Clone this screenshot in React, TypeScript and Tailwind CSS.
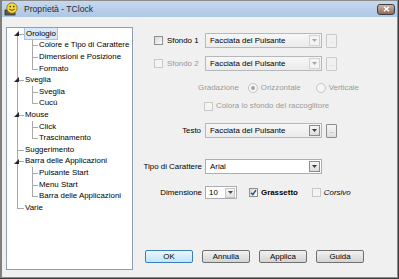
import React from "react";
import clsx from "clsx";

type TreeNode = {
  label: string;
  level: 0 | 1;
  rootLine: "full" | "bottom" | "top" | "none";
  childLine?: "full" | "top";
  expander?: boolean;
  selected?: boolean;
};

const tree: TreeNode[] = [
  { label: "Orologio", level: 0, rootLine: "bottom", expander: true, selected: true },
  { label: "Colore e Tipo di Carattere", level: 1, rootLine: "full", childLine: "full" },
  { label: "Dimensioni e Posizione", level: 1, rootLine: "full", childLine: "full" },
  { label: "Formato", level: 1, rootLine: "full", childLine: "top" },
  { label: "Sveglia", level: 0, rootLine: "full", expander: true },
  { label: "Sveglia", level: 1, rootLine: "full", childLine: "full" },
  { label: "Cucù", level: 1, rootLine: "full", childLine: "top" },
  { label: "Mouse", level: 0, rootLine: "full", expander: true },
  { label: "Click", level: 1, rootLine: "full", childLine: "full" },
  { label: "Trascinamento", level: 1, rootLine: "full", childLine: "top" },
  { label: "Suggerimento", level: 0, rootLine: "full" },
  { label: "Barra delle Applicazioni", level: 0, rootLine: "full", expander: true },
  { label: "Pulsante Start", level: 1, rootLine: "full", childLine: "full" },
  { label: "Menu Start", level: 1, rootLine: "full", childLine: "full" },
  { label: "Barra delle Applicazioni", level: 1, rootLine: "full", childLine: "top" },
  { label: "Varie", level: 0, rootLine: "top" },
];

const TreeRow = ({ node }: { node: TreeNode }) => (
  <div className="flex h-[11.6px] items-center">
    {/* root column */}
    <div className="relative h-full w-[17px] shrink-0">
      {node.rootLine !== "none" && (
        <span
          className={clsx(
            "absolute left-[10px] w-px bg-[#a9a9a9]",
            node.rootLine === "full" && "top-0 bottom-0",
            node.rootLine === "bottom" && "top-1/2 bottom-0",
            node.rootLine === "top" && "top-0 h-1/2"
          )}
        />
      )}
      {node.level === 0 && (
        <span className="absolute left-[10px] top-1/2 h-px w-[7px] bg-[#a9a9a9]" />
      )}
      {node.expander && (
        <svg className="absolute left-[7px] top-[3px]" width="5" height="5" viewBox="0 0 5 5">
          <polygon points="5,0 5,5 0,5" fill="#262626" />
        </svg>
      )}
    </div>
    {node.level === 1 && (
      <div className="relative h-full w-[14px] shrink-0">
        <span
          className={clsx(
            "absolute left-[8px] w-px bg-[#a9a9a9]",
            node.childLine === "full" ? "top-0 bottom-0" : "top-0 h-1/2"
          )}
        />
        <span className="absolute left-[8px] top-1/2 h-px w-[6px] bg-[#a9a9a9]" />
      </div>
    )}
    <span
      className={clsx(
        "whitespace-nowrap leading-none",
        node.level === 0 ? "px-[1px] py-[1.5px]" : "ml-[1px]",
        node.selected && "border border-[#9ec4ea] bg-[#d7e9fb] px-[0px]"
      )}
    >
      {node.label}
    </span>
  </div>
);

const Check = ({ checked, disabled }: { checked?: boolean; disabled?: boolean }) => (
  <span
    className={clsx(
      "flex h-[9px] w-[9px] shrink-0 items-center justify-center border",
      disabled
        ? "border-[#c9c9c9] bg-[#f4f4f4]"
        : "border-[#8e8f8f] bg-gradient-to-br from-[#d6d9dc] to-[#fbfbfb]"
    )}
  >
    {checked && (
      <svg width="7" height="7" viewBox="0 0 7 7">
        <path d="M1 3.8 L2.8 5.6 L6 1.2" fill="none" stroke="#2a4a7a" strokeWidth="1.4" />
      </svg>
    )}
  </span>
);

const Radio = ({ checked }: { checked?: boolean }) => (
  <span className="flex h-[10px] w-[10px] shrink-0 items-center justify-center rounded-full border border-[#c4c4c4] bg-[#f6f6f6]">
    {checked && <span className="h-[4px] w-[4px] rounded-full bg-[#a6a6a6]" />}
  </span>
);

const Arrow = ({ color }: { color: string }) => (
  <svg width="5" height="3" viewBox="0 0 5 3">
    <polygon points="0,0 5,0 2.5,3" fill={color} />
  </svg>
);

const Combo = ({
  text,
  width,
  variant,
}: {
  text: string;
  width: string;
  variant: "dim" | "list" | "edit";
}) => (
  <div
    className={clsx(
      "flex h-[15px] items-center border pl-[4px] pr-[1px]",
      width,
      variant === "edit"
        ? "border-[#abadb3] bg-white"
        : "border-[#b5b8bc] bg-gradient-to-b from-[#f7f7f7] to-[#ebebeb]"
    )}
  >
    <span className="flex-1 whitespace-nowrap leading-none">{text}</span>
    <span
      className={clsx(
        "flex h-[11px] w-[11px] items-center justify-center border",
        variant === "dim"
          ? "border-[#d2d2d2] bg-[#f4f4f4]"
          : "border-[#8c8c8c] bg-gradient-to-b from-[#f6f6f6] to-[#dcdcdc]"
      )}
    >
      <Arrow color={variant === "dim" ? "#a8a8a8" : "#3c3c3c"} />
    </span>
  </div>
);

const Dots = ({ dim }: { dim?: boolean }) => (
  <div
    className={clsx(
      "flex h-[14px] w-[11px] items-end justify-center rounded-[1px] border pb-[3px] text-[5px] leading-none",
      dim ? "border-[#cacaca] text-[#b4b4b4]" : "border-[#8c8c8c] bg-gradient-to-b from-[#f6f6f6] to-[#dedede] text-[#5a5a5a]"
    )}
  >
    ...
  </div>
);

const Button = ({ label, focused }: { label: string; focused?: boolean }) => (
  <div
    className={clsx(
      "flex h-[13px] w-[48px] items-center justify-center rounded-[2px] border leading-none",
      focused
        ? "border-[#3c7fb1] bg-gradient-to-b from-[#eaf6fd] to-[#bee6fd]"
        : "border-[#707070] bg-gradient-to-b from-[#f2f2f2] to-[#d4d4d4]"
    )}
  >
    {label}
  </div>
);

export default function App() {
  return (
    <div className="flex h-[279px] w-[399px] flex-col overflow-hidden border-r border-b border-[#3d3d3d] font-['Liberation_Sans',Arial,sans-serif] text-[7.9px] text-black">
      <div className="flex flex-1 flex-col border-r border-b border-l-2 border-r-[#35a7d3] border-b-[#35a7d3] border-l-[#7f7f7f] bg-[#f0f0f0]">
        {/* title bar */}
        <div className="flex h-[17px] shrink-0 items-center border-t border-[#8c8c8c] bg-gradient-to-b from-[#c6d8ee] to-[#aec7e5] pl-[2px] pr-[2px]">
          <svg width="15" height="14" viewBox="0 0 15 14">
            <rect x="1" y="8" width="10" height="5" fill="#5a5a5a" stroke="#2e2e2e" strokeWidth="0.8" />
            <circle cx="8" cy="6" r="5.2" fill="#f6d73a" stroke="#8a6d10" strokeWidth="0.8" />
            <circle cx="6.2" cy="4.6" r="0.8" fill="#3a2a00" />
            <circle cx="9.8" cy="4.6" r="0.8" fill="#3a2a00" />
            <path d="M5.2 7.2 Q8 9.6 10.8 7.2" fill="none" stroke="#3a2a00" strokeWidth="0.8" />
          </svg>
          <span className="ml-[5px] text-[8.6px] leading-none text-[#1f2a38]">Proprietà - TClock</span>
          <div className="ml-auto flex h-[11px] w-[18px] items-center justify-center rounded-[3px] border border-[#3f3f3f] bg-gradient-to-b from-[#cdb6a8] to-[#8c6b5d]">
            <svg width="7" height="6" viewBox="0 0 7 6">
              <path d="M1 0.8 L6 5.2 M6 0.8 L1 5.2" stroke="white" strokeWidth="1.5" />
            </svg>
          </div>
        </div>

        <div className="flex flex-1 pl-[4px]">
          {/* tree */}
          <div className="mt-[10px] h-[243px] w-[127px] shrink-0 overflow-hidden border border-[#8e9eb2] bg-white">
            {tree.map((node, i) => (
              <TreeRow key={i} node={node} />
            ))}
          </div>

          {/* right panel */}
          <div className="ml-[12px] flex flex-1 flex-col">
            <div className="mt-[16px] flex h-[15px] items-center">
              <div className="flex w-[60px] items-center gap-[4px] pl-[9px]">
                <Check />
                <span className="whitespace-nowrap leading-none">Sfondo 1</span>
              </div>
              <Combo text="Facciata del Pulsante" width="w-[117px]" variant="dim" />
              <div className="ml-[4px]">
                <Dots dim />
              </div>
            </div>

            <div className="mt-[8px] flex h-[15px] items-center">
              <div className="flex w-[60px] items-center gap-[4px] pl-[9px] text-[#9a9a9a]">
                <Check disabled />
                <span className="whitespace-nowrap leading-none">Sfondo 2</span>
              </div>
              <Combo text="Facciata del Pulsante" width="w-[117px]" variant="dim" />
              <div className="ml-[4px]">
                <Dots dim />
              </div>
            </div>

            <div className="mt-[12px] flex h-[10px] items-center whitespace-nowrap pl-[53px] text-[#9a9a9a]">
              <span className="leading-none">Gradazione</span>
              <span className="ml-[9px]">
                <Radio checked />
              </span>
              <span className="ml-[3px] leading-none">Orizzontale</span>
              <span className="ml-[15px]">
                <Radio />
              </span>
              <span className="ml-[3px] leading-none">Verticale</span>
            </div>

            <div className="mt-[8px] flex h-[10px] items-center gap-[3px] whitespace-nowrap pl-[59px] text-[#9a9a9a]">
              <Check disabled />
              <span className="leading-none">Colora lo sfondo del raccoglitore</span>
            </div>

            <div className="mt-[12px] flex h-[15px] items-center">
              <div className="flex w-[60px] justify-end pr-[4px] leading-none">Testo</div>
              <Combo text="Facciata del Pulsante" width="w-[117px]" variant="list" />
              <div className="ml-[4px]">
                <Dots />
              </div>
            </div>

            <div className="mt-[21px] flex h-[15px] items-center">
              <div className="flex w-[60px] justify-end whitespace-nowrap pr-[3px] leading-none">Tipo di Carattere</div>
              <Combo text="Arial" width="w-[117px]" variant="edit" />
            </div>

            <div className="mt-[12px] flex h-[13px] items-center">
              <div className="flex w-[60px] justify-end pr-[3px] leading-none">Dimensione</div>
              <div className="flex h-[13px] w-[32px] items-center border border-[#abadb3] bg-white pl-[3px] pr-[1px]">
                <span className="flex-1 leading-none">10</span>
                <span className="flex h-[10px] w-[10px] items-center justify-center border border-[#c4c4c4] bg-gradient-to-b from-[#f6f6f6] to-[#e2e2e2]">
                  <Arrow color="#4a4a4a" />
                </span>
              </div>
              <span className="ml-[12px]">
                <Check checked />
              </span>
              <span className="ml-[3px] font-bold leading-none">Grassetto</span>
              <span className="ml-[14px]">
                <Check disabled />
              </span>
              <span className="ml-[3px] italic leading-none">Corsivo</span>
            </div>

            <div className="mt-[51px] flex gap-[9px]">
              <Button label="OK" focused />
              <Button label="Annulla" />
              <Button label="Applica" />
              <Button label="Guida" />
            </div>
          </div>
        </div>
      </div>
    </div>
  );
}
